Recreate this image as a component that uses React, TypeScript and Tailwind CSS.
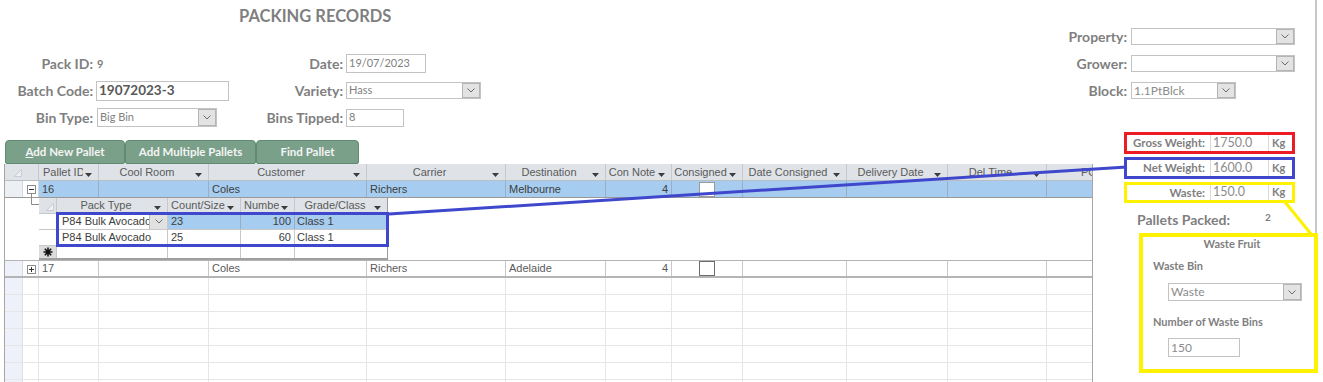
import React from 'react';

const sans = "font-['Lato',sans-serif]";
const grid = "font-['Liberation_Sans',Arial,sans-serif]";

const mainCols = [
  { w: 'w-[60px]', label: 'Pallet ID' },
  { w: 'w-[110px]', label: 'Cool Room' },
  { w: 'w-[158px]', label: 'Customer' },
  { w: 'w-[139px]', label: 'Carrier' },
  { w: 'w-[100px]', label: 'Destination' },
  { w: 'w-[66px]', label: 'Con Note' },
  { w: 'w-[71px]', label: 'Consigned' },
  { w: 'w-[104px]', label: 'Date Consigned' },
  { w: 'w-[101px]', label: 'Delivery Date' },
  { w: 'w-[99px]', label: 'Del Time' },
];

const subCols = [
  { w: 'w-[111px]', label: 'Pack Type' },
  { w: 'w-[73px]', label: 'Count/Size' },
  { w: 'w-[54px]', label: 'Number' },
  { w: 'w-[92px]', label: 'Grade/Class' },
];

const Chevron = () => (
  <svg width="8" height="5" viewBox="0 0 8 5">
    <path d="M0.5 0.5L4 4L7.5 0.5" fill="none" stroke="#6b6b6b" strokeWidth="1" />
  </svg>
);

const FilterArrow = () => (
  <svg width="7" height="4" viewBox="0 0 7 4" className="mt-[5px] shrink-0">
    <path d="M0 0H7L3.5 4Z" fill="#3c3c3c" />
  </svg>
);

const Corner = () => (
  <svg width="8" height="8" viewBox="0 0 8 8">
    <path d="M7.5 0.5L7.5 7.5L0.5 7.5Z" fill="#eef0f3" stroke="#c9cdd3" strokeWidth="1" />
  </svg>
);

const DropBox = ({ className, text, textClass }: { className: string; text: string; textClass: string }) => (
  <div className={`flex bg-white border border-[#c3c3c3] ${className}`}>
    <div className={`flex-1 flex items-center pl-[2px] overflow-hidden whitespace-nowrap ${textClass}`}>{text}</div>
    <div className="w-[18px] shrink-0 flex items-center justify-center bg-[#e3e3e3] border border-[#b4b4b4]">
      <Chevron />
    </div>
  </div>
);

const TextBox = ({ className, text, textClass }: { className: string; text: string; textClass: string }) => (
  <div className={`flex items-center bg-white border border-[#c3c3c3] pl-[2px] whitespace-nowrap ${className} ${textClass}`}>
    {text}
  </div>
);

const CheckBox = ({ border }: { border: string }) => (
  <div className={`w-[16px] h-[15px] bg-white border ${border}`} />
);

const Expander = ({ open }: { open: boolean }) => (
  <svg width="16" height="17" viewBox="0 0 16 17">
    <rect x="4.5" y="4.5" width="8" height="8" fill="#fff" stroke="#8c8c8c" />
    <path d="M6 8.5H11" stroke="#333" />
    {!open && <path d="M8.5 6V11" stroke="#333" />}
    {open && <path d="M8.5 13V17" stroke="#8c8c8c" />}
  </svg>
);

const Star = () => (
  <svg width="10" height="10" viewBox="0 0 10 10">
    <path d="M5 0.5V9.5M0.5 5H9.5M1.8 1.8L8.2 8.2M8.2 1.8L1.8 8.2" stroke="#111" strokeWidth="1.6" />
  </svg>
);

const WeightBox = ({ border, label, value, h }: { border: string; label: string; value: string; h: string }) => (
  <div className={`flex w-[171px] border-[3px] ${border} ${h}`}>
    <div className="w-[78px] flex items-center justify-end text-[11.5px] font-bold text-[#7f7f7f]">{label}</div>
    <div className="w-[59px] ml-[5px] flex items-center pl-[2px] border-x border-[#d9d9d9] text-[12.5px] text-[#8c8c8c]">
      {value}
    </div>
    <div className="ml-[3px] flex items-center text-[11px] font-bold text-[#7f7f7f]">Kg</div>
  </div>
);

type Cell = { text?: string; right?: boolean; check?: boolean };

const row16: Cell[] = [
  { text: '16' }, {}, { text: 'Coles' }, { text: 'Richers' }, { text: 'Melbourne' },
  { text: '4', right: true }, { check: true }, {}, {}, {},
];
const row17: Cell[] = [
  { text: '17' }, {}, { text: 'Coles' }, { text: 'Richers' }, { text: 'Adelaide' },
  { text: '4', right: true }, { check: true }, {}, {}, {},
];

export default function App() {
  return (
    <div className={`relative w-[1323px] h-[382px] overflow-hidden bg-white ${sans}`}>
      {/* form header */}
      <div className="flex h-[132px]">
        <div className="flex flex-col">
          <div className="h-[50px] pl-[239px] pt-[6px] text-[16.5px] leading-[20px] font-bold text-[#7f7f7f]">
            PACKING RECORDS
          </div>
          <div className="flex text-[14px] font-bold text-[#7f7f7f]">
            <div className="flex flex-col w-[229px]">
              <div className="h-[27px] flex items-center">
                <div className="w-[93px] text-right">Pack ID:</div>
                <div className="ml-[4px] mt-[2px] text-[11px]">9</div>
              </div>
              <div className="h-[27px] flex items-center">
                <div className="w-[93px] text-right">Batch Code:</div>
                <TextBox className="ml-[3px] w-[133px] h-[20px]" text="19072023-3" textClass="text-[13.5px] font-bold text-[#595959]" />
              </div>
              <div className="h-[27px] flex items-center">
                <div className="w-[93px] text-right">Bin Type:</div>
                <DropBox className="ml-[4px] w-[120px] h-[19px]" text="Big Bin" textClass="text-[11px] font-normal text-[#7f7f7f]" />
              </div>
            </div>
            <div className="flex flex-col">
              <div className="h-[27px] flex items-center">
                <div className="w-[114px] text-right">Date:</div>
                <TextBox className="ml-[3px] w-[80px] h-[19px]" text="19/07/2023" textClass="text-[11px] font-normal text-[#7f7f7f]" />
              </div>
              <div className="h-[27px] flex items-center">
                <div className="w-[114px] text-right">Variety:</div>
                <DropBox className="ml-[3px] w-[135px] h-[17px]" text="Hass" textClass="text-[11px] font-normal text-[#7f7f7f]" />
              </div>
              <div className="h-[27px] flex items-center">
                <div className="w-[114px] text-right">Bins Tipped:</div>
                <TextBox className="ml-[3px] w-[58px] h-[18px]" text="8" textClass="text-[11px] font-normal text-[#7f7f7f]" />
              </div>
            </div>
          </div>
        </div>

        <div className="ml-auto mr-[6px] w-[257px] border-r-2 border-[#c8c8c8] pt-[23px] text-[14px] font-bold text-[#7f7f7f]">
          <div className="h-[27px] flex items-center">
            <div className="w-[67px] text-right">Property:</div>
            <DropBox className="ml-[4px] w-[164px] h-[17px]" text="" textClass="" />
          </div>
          <div className="h-[27px] flex items-center">
            <div className="w-[67px] text-right">Grower:</div>
            <DropBox className="ml-[4px] w-[164px] h-[17px]" text="" textClass="" />
          </div>
          <div className="h-[27px] flex items-center">
            <div className="w-[67px] text-right">Block:</div>
            <DropBox className="ml-[4px] w-[105px] h-[17px]" text="1.1PtBlck" textClass="text-[12px] font-normal text-[#8c8c8c]" />
          </div>
        </div>
      </div>

      {/* lower part */}
      <div className="flex h-[250px]">
        <div className="w-[1093px] pt-[8px]">
          <div className="flex pl-[5px] h-[24px] text-[11.5px] font-bold text-[#f4f4f4]">
            <div className="w-[120px] flex items-center justify-center bg-[#7ba08a] border border-[#5f8b70] rounded-t-[4px] rounded-b-[2px]">
              <span><span className="underline">A</span>dd New Pallet</span>
            </div>
            <div className="w-[131px] flex items-center justify-center bg-[#7ba08a] border border-[#5f8b70] rounded-t-[4px] rounded-b-[2px]">
              Add Multiple Pallets
            </div>
            <div className="w-[103px] flex items-center justify-center bg-[#7ba08a] border border-[#5f8b70] rounded-t-[4px] rounded-b-[2px]">
              Find Pallet
            </div>
          </div>

          {/* datasheet */}
          <div className={`ml-[4px] w-[1089px] h-[218px] border-x border-[#a6a6a6] overflow-hidden text-[11px] ${grid}`}>
            {/* header */}
            <div className="flex h-[17px] bg-[#dfe3e8] border-b border-[#b9bec5] text-[#5a5a5a]">
              <div className="w-[34px] flex items-end justify-end pr-[16px] pb-[3px] border-r border-[#c5c9cf]">
                <Corner />
              </div>
              {mainCols.map((c, i) => (
                <div key={i} className={`${c.w} h-full flex items-center border-r border-[#c5c9cf] ${i === 0 ? 'pl-[4px]' : 'pl-[2px]'}`}>
                  <span className="flex-1 min-w-0 overflow-hidden whitespace-nowrap text-center">{c.label}</span>
                  <span className="ml-[2px] flex"><FilterArrow /></span>
                  <span className="w-[6px] shrink-0" />
                </div>
              ))}
              <div className="w-[45px] flex items-center pl-[34px] whitespace-nowrap overflow-hidden">PO</div>
            </div>

            {/* row 16 */}
            <div className="flex h-[17px] border-b border-[#9a9a9a] text-[#3d3d3d]">
              <div className="w-[18px] bg-[#eceff4] border-r border-[#d5d8de]" />
              <div className="w-[16px] border-r border-[#d5d8de]"><Expander open /></div>
              {mainCols.map((c, i) => (
                <div key={i} className={`${c.w} h-full flex items-center bg-[#a6cdf0] border-r border-[#97aec3] px-[3px] whitespace-nowrap overflow-hidden ${row16[i].right ? 'justify-end' : ''} ${row16[i].check ? 'justify-center' : ''}`}>
                  {row16[i].check ? <CheckBox border="border-[#9a9a9a]" /> : row16[i].text}
                </div>
              ))}
              <div className="w-[45px] bg-[#a6cdf0]" />
            </div>

            {/* subdatasheet */}
            <div className="flex h-[63px] border-b border-[#b4b4b4]">
              <div className="w-[34px]">
                <svg width="34" height="12" viewBox="0 0 34 12">
                  <path d="M26.5 0V6.5H34" fill="none" stroke="#8c8c8c" />
                </svg>
              </div>
              <div className="w-[349px] border-r border-[#9a9a9a] text-[#3d3d3d]">
                <div className="flex h-[16px] bg-[#dfe3e8] border-b border-[#c5c9cf] text-[#5a5a5a]">
                  <div className="w-[18px] flex items-end justify-end pr-[2px] pb-[2px] border-r border-[#c5c9cf]">
                    <Corner />
                  </div>
                  {subCols.map((c, i) => (
                    <div key={i} className={`${c.w} h-full flex items-center pl-[3px] ${i < 3 ? 'border-r border-[#c5c9cf]' : ''}`}>
                      <span className="flex-1 min-w-0 overflow-hidden whitespace-nowrap text-center">{c.label}</span>
                      <span className="ml-[2px] flex"><FilterArrow /></span>
                      <span className="w-[6px] shrink-0" />
                    </div>
                  ))}
                </div>
                <div className="flex h-[16px] border-b border-[#c8c8c8]">
                  <div className="w-[18px] border-r border-[#c8c8c8]" />
                  <div className="w-[111px] flex bg-white border-r border-[#c8c8c8]">
                    <div className="flex-1 min-w-0 flex items-center pl-[5px] overflow-hidden whitespace-nowrap">P84 Bulk Avocado</div>
                    <div className="w-[18px] shrink-0 flex items-center justify-center bg-[#e1e1e1] border-l border-[#b8b8b8]"><Chevron /></div>
                  </div>
                  <div className="w-[73px] flex items-center pl-[3px] bg-[#a6cdf0] border-r border-[#97aec3]">23</div>
                  <div className="w-[54px] flex items-center justify-end pr-[3px] bg-[#a6cdf0] border-r border-[#97aec3]">100</div>
                  <div className="w-[92px] flex items-center pl-[2px] bg-[#a6cdf0]">Class 1</div>
                </div>
                <div className="flex h-[16px] border-b border-[#c8c8c8]">
                  <div className="w-[18px] border-r border-[#c8c8c8]" />
                  <div className="w-[111px] flex items-center pl-[5px] border-r border-[#c8c8c8] whitespace-nowrap overflow-hidden">P84 Bulk Avocado</div>
                  <div className="w-[73px] flex items-center pl-[3px] border-r border-[#c8c8c8]">25</div>
                  <div className="w-[54px] flex items-center justify-end pr-[3px] border-r border-[#c8c8c8]">60</div>
                  <div className="w-[92px] flex items-center pl-[2px]">Class 1</div>
                </div>
                <div className="flex h-[14px] border-b-2 border-[#a0a0a0]">
                  <div className="w-[18px] flex items-center justify-center bg-[#dcdcdc] border-r border-[#c8c8c8]"><Star /></div>
                  <div className="w-[111px] border-r border-[#c8c8c8]" />
                  <div className="w-[73px] border-r border-[#c8c8c8]" />
                  <div className="w-[54px] border-r border-[#c8c8c8]" />
                  <div className="w-[92px]" />
                </div>
              </div>
            </div>

            {/* row 17 */}
            <div className="flex h-[17px] border-b-2 border-[#b4b4b4] text-[#5a5a5a]">
              <div className="w-[18px] bg-[#eef1f9] border-r border-[#d5d8de]" />
              <div className="w-[16px] border-r border-[#d5d8de]"><Expander open={false} /></div>
              {mainCols.map((c, i) => (
                <div key={i} className={`${c.w} h-full flex items-center border-r border-[#c8c8c8] px-[3px] whitespace-nowrap overflow-hidden ${row17[i].right ? 'justify-end' : ''} ${row17[i].check ? 'justify-center' : ''}`}>
                  {row17[i].check ? <CheckBox border="border-[#6b6b6b]" /> : row17[i].text}
                </div>
              ))}
              <div className="w-[45px]" />
            </div>

            {/* empty grid */}
            {[0, 1, 2, 3, 4, 5, 6].map((r) => (
              <div key={r} className="flex h-[17px] border-b border-[#e6e6e6]">
                <div className="w-[18px] bg-[#eef1f9] border-r border-[#dde1e8]" />
                <div className="w-[16px] border-r border-[#e6e6e6]" />
                {mainCols.map((c, i) => (
                  <div key={i} className={`${c.w} h-full border-r border-[#e6e6e6]`} />
                ))}
                <div className="w-[45px]" />
              </div>
            ))}
          </div>
        </div>

        {/* right panel */}
        <div className="w-[230px]">
          <div className="w-[224px] h-[101px] border-r-2 border-[#c8c8c8]">
            <div className="ml-[31px]">
              <WeightBox border="border-[#ed1c24]" label="Gross Weight:" value="1750.0" h="h-[22px]" />
              <div className="mt-[3px]">
                <WeightBox border="border-[#3f48cc]" label="Net Weight:" value="1600.0" h="h-[22px]" />
              </div>
              <div className="mt-[3px]">
                <WeightBox border="border-[#fff200]" label="Waste:" value="150.0" h="h-[21px]" />
              </div>
            </div>
            <div className="mt-[6px] ml-[44px] h-[20px] flex items-center font-bold text-[#7f7f7f]">
              <div className="w-[128px] text-[14px]">Pallets Packed:</div>
              <div className="text-[10px] -mt-[3px]">2</div>
            </div>
          </div>

          <div className="ml-[46px] w-[179px] h-[140px] border-4 border-[#fff200] font-bold text-[#7f7f7f] text-[11px]">
            <div className="h-[14px] leading-[14px] text-center pl-[7px]">Waste Fruit</div>
            <div className="mt-[8px] h-[14px] leading-[14px] pl-[10px]">Waste Bin</div>
            <DropBox className="mt-[10px] ml-[25px] w-[134px] h-[18px]" text="Waste" textClass="text-[12px] font-normal text-[#8c8c8c]" />
            <div className="mt-[14px] h-[14px] leading-[14px] pl-[10px]">Number of Waste Bins</div>
            <TextBox className="mt-[9px] ml-[25px] w-[72px] h-[19px]" text="150" textClass="text-[12px] font-normal text-[#8c8c8c]" />
          </div>
        </div>
      </div>

      {/* annotations */}
      <svg className="absolute left-0 top-0 pointer-events-none" width="1323" height="382" viewBox="0 0 1323 382">
        <rect x="57.5" y="213.5" width="330" height="32" fill="none" stroke="#3f48cc" strokeWidth="3" />
        <line x1="389" y1="214" x2="1127" y2="167" stroke="#3f48cc" strokeWidth="3" />
        <line x1="1285" y1="202" x2="1311" y2="234" stroke="#fff200" strokeWidth="3" />
      </svg>
    </div>
  );
}
